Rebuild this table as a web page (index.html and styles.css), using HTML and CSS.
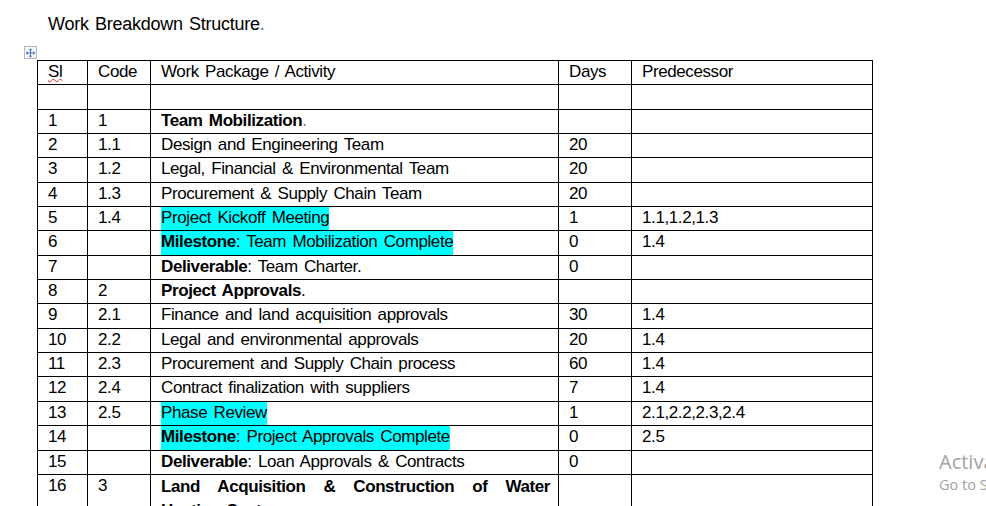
FILE: index.html
```html
<!DOCTYPE html>
<html>
<head>
<meta charset="utf-8">
<link rel="stylesheet" href="styles.css">
</head>
<body>
<div class="page">
  <h1 class="title">Work Breakdown Structure<span class="mark">.</span></h1>
  <div class="table-wrap">
    <span class="move-handle">
      <svg width="12" height="12" viewBox="0 0 12 12">
        <g fill="none" stroke="#3a6fc4" stroke-width="1">
          <line x1="6" y1="1.5" x2="6" y2="10.5"/>
          <line x1="1.5" y1="6" x2="10.5" y2="6"/>
        </g>
        <g fill="#3a6fc4">
          <polygon points="6,1 4,3 8,3"/>
          <polygon points="6,11 4,9 8,9"/>
          <polygon points="1,6 3,4 3,8"/>
          <polygon points="11,6 9,4 9,8"/>
        </g>
      </svg>
    </span>
    <table class="wbs">
      <colgroup>
        <col class="c-sl"><col class="c-code"><col class="c-work"><col class="c-days"><col class="c-pred">
      </colgroup>
      <tbody>
        <tr><td><span class="spell">Sl</span></td><td>Code</td><td>Work Package / Activity</td><td>Days</td><td>Predecessor</td></tr>
        <tr><td></td><td></td><td></td><td></td><td></td></tr>
        <tr><td>1</td><td>1</td><td><b>Team Mobilization</b><span class="mark">.</span></td><td></td><td></td></tr>
        <tr><td>2</td><td>1.1</td><td>Design and Engineering Team</td><td>20</td><td></td></tr>
        <tr><td>3</td><td>1.2</td><td>Legal, Financial &amp; Environmental Team</td><td>20</td><td></td></tr>
        <tr><td>4</td><td>1.3</td><td>Procurement &amp; Supply Chain Team</td><td>20</td><td></td></tr>
        <tr><td>5</td><td>1.4</td><td><span class="hl">Project Kickoff Meeting</span></td><td>1</td><td>1.1,1.2,1.3</td></tr>
        <tr><td>6</td><td></td><td><span class="hl"><b>Milestone</b>: Team Mobilization Complete</span></td><td>0</td><td>1.4</td></tr>
        <tr><td>7</td><td></td><td><b>Deliverable</b>: Team Charter.</td><td>0</td><td></td></tr>
        <tr><td>8</td><td>2</td><td><b>Project Approvals</b>.</td><td></td><td></td></tr>
        <tr><td>9</td><td>2.1</td><td>Finance and land acquisition approvals</td><td>30</td><td>1.4</td></tr>
        <tr><td>10</td><td>2.2</td><td>Legal and environmental approvals</td><td>20</td><td>1.4</td></tr>
        <tr><td>11</td><td>2.3</td><td>Procurement and Supply Chain process</td><td>60</td><td>1.4</td></tr>
        <tr><td>12</td><td>2.4</td><td>Contract finalization with suppliers</td><td>7</td><td>1.4</td></tr>
        <tr><td>13</td><td>2.5</td><td><span class="hl">Phase Review</span></td><td>1</td><td>2.1,2.2,2.3,2.4</td></tr>
        <tr><td>14</td><td></td><td><span class="hl"><b>Milestone</b>: Project Approvals Complete</span></td><td>0</td><td>2.5</td></tr>
        <tr><td>15</td><td></td><td><b>Deliverable</b>: Loan Approvals &amp; Contracts</td><td>0</td><td></td></tr>
        <tr><td>16</td><td>3</td><td class="just"><b>Land Acquisition &amp; Construction of Water Heating System</b></td><td></td><td></td></tr>
      </tbody>
    </table>
  </div>
</div>
<div class="activate">
  <div class="act-big">Activate Windows</div>
  <div class="act-small">Go to Settings to activate Windows.</div>
</div>
</body>
</html>
```

FILE: styles.css
```css
html, body {
  margin: 0;
  padding: 0;
  overflow: hidden;
  background: #ffffff;
}

body {
  font-family: "Liberation Sans", Arial, sans-serif;
  color: #000000;
  width: 986px;
  height: 506px;
  position: relative;
}

.page {
  padding: 13.5px 0 0 37px;
}

.title {
  margin: 0 0 0 11px;
  font-size: 18px;
  font-weight: normal;
  line-height: 21px;
  letter-spacing: -0.25px;
  word-spacing: 1.5px;
}

.mark {
  color: #5a6f9a;
}

.table-wrap {
  position: relative;
  margin-top: 25.5px;
}

.move-handle {
  position: absolute;
  left: -13px;
  top: -14px;
  width: 11px;
  height: 11px;
  border: 1px solid #b8b8b8;
  background: #f4f4f4;
  display: flex;
  align-items: center;
  justify-content: center;
}

.wbs {
  border-collapse: separate;
  border-spacing: 0;
  table-layout: fixed;
  width: 836px;
  border-top: 1px solid #000;
  border-left: 1px solid #000;
  font-size: 17px;
  letter-spacing: -0.4px;
}

.c-sl { width: 50px; }
.c-code { width: 63px; }
.c-work { width: 408px; }
.c-days { width: 73px; }
.c-pred { width: 241px; }

.wbs td {
  border-right: 1px solid #000;
  border-bottom: 1px solid #000;
  padding: 0 8px 0 10px;
  height: 23.35px;
  line-height: 21px;
  vertical-align: top;
  white-space: nowrap;
  word-spacing: 2px;
  overflow: hidden;
}

.wbs td.just {
  white-space: normal;
  text-align: justify;
  line-height: 24px;
}

.spell {
  text-decoration: underline wavy #e02020;
  text-decoration-thickness: 1px;
  text-underline-offset: 1px;
}

.hl {
  background: #00ffff;
  display: inline-block;
  vertical-align: top;
  height: 23.35px;
  line-height: 21px;
}

.activate {
  position: absolute;
  left: 939px;
  top: 449px;
  font-family: "Open Sans", "Noto Sans", sans-serif;
  color: #a3a3a3;
  white-space: nowrap;
}

.act-big {
  font-size: 20px;
  line-height: 26px;
}

.act-small {
  font-size: 14.5px;
  line-height: 20px;
}
```
